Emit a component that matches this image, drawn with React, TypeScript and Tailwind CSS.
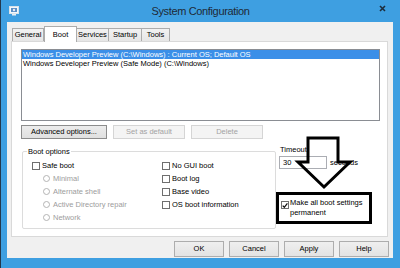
import React from "react";

const Check = ({ checked = false }: { checked?: boolean }) => (
  <span className="w-[8px] h-[8px] shrink-0 bg-white border border-[#6f6f6f] flex items-center justify-center">
    {checked && (
      <svg width="7" height="7" viewBox="0 0 7 7">
        <path d="M0.8 3.6 L2.7 5.6 L6.3 1" fill="none" stroke="#111" strokeWidth="1.5" />
      </svg>
    )}
  </span>
);

const Radio = () => (
  <span className="w-[7px] h-[7px] shrink-0 rounded-full bg-white border border-[#b4b4b4]" />
);

const Btn = ({ label, w, disabled = false, dark = false }: { label: string; w: string; disabled?: boolean; dark?: boolean }) => (
  <div
    className={`${w} h-full flex items-center justify-center border ${
      disabled
        ? "bg-[#f4f4f4] border-[#d5d5d5] text-[#a3a3a3]"
        : dark
        ? "bg-gradient-to-b from-[#ececec] to-[#e0e0e0] border-[#8c8c8c] text-black"
        : "bg-gradient-to-b from-[#efefef] to-[#e3e3e3] border-[#adadad] text-black"
    }`}
  >
    {label}
  </div>
);

const Tab = ({ label, w, active = false }: { label: string; w: string; active?: boolean }) => (
  <div
    className={`${w} flex items-center justify-center border border-b-0 border-[#acacac] ${
      active ? "h-[16px] bg-white relative z-10 -mb-px" : "h-[13px] bg-gradient-to-b from-[#f2f2f2] to-[#e6e6e6] -ml-px first:ml-0"
    }`}
  >
    {label}
  </div>
);

const App = () => {
  return (
    <div className="w-[400px] h-[268px] bg-[#3e9fe1] flex flex-col overflow-hidden border-l border-[#23384d] font-['Liberation_Sans',Arial,sans-serif] text-[7.5px] leading-none text-black">
      {/* Title bar */}
      <div className="h-[22px] flex items-center shrink-0">
        <div className="w-[40px] pl-[8px] flex items-center">
          <svg width="10" height="10" viewBox="0 0 10 10">
            <rect x="0.5" y="0.5" width="9" height="7" fill="#f4f8fb" stroke="#d8e2ea" />
            <rect x="2" y="2" width="6" height="4" fill="#5b8fc6" />
            <circle cx="5" cy="4" r="1.2" fill="#e9eef4" />
            <rect x="3" y="8" width="4" height="1.5" fill="#e6edf3" />
          </svg>
        </div>
        <div className="flex-1 text-center text-[11px] tracking-[-0.35px] text-[#1f2a36] pt-[1px]">System Configuration</div>
        <div className="w-[40px] flex justify-end pr-[14px] pb-[6px]">
          <svg width="7" height="7" viewBox="0 0 7 7">
            <path d="M1 1 L6 6 M6 1 L1 6" stroke="#1d2d3c" strokeWidth="1.6" />
          </svg>
        </div>
      </div>

      {/* Client */}
      <div className="ml-[6px] mr-[7px] h-[236px] shrink-0 bg-[#f0f0f0] flex flex-col">
        {/* Tabs */}
        <div className="h-[19px] pl-[5px] flex items-end shrink-0">
          <Tab label="General" w="w-[32px]" />
          <Tab label="Boot" w="w-[33px]" active />
          <Tab label="Services" w="w-[33px]" />
          <Tab label="Startup" w="w-[34px]" />
          <Tab label="Tools" w="w-[29px]" />
        </div>

        {/* Tab panel */}
        <div className="ml-[4px] w-[377px] h-[196px] bg-white border border-[#d9d9d9] relative flex flex-col">
          {/* OS list */}
          <div className="ml-[9px] mt-[7px] w-[359px] h-[72px] border border-[#8a8d93] bg-white flex flex-col">
            <div className="h-[9px] bg-[#3b8fe8] text-white pl-[1px] flex items-center whitespace-nowrap">
              Windows Developer Preview (C:\Windows) : Current OS; Default OS
            </div>
            <div className="h-[10px] pl-[1px] flex items-center whitespace-nowrap">
              Windows Developer Preview (Safe Mode) (C:\Windows)
            </div>
          </div>

          {/* List buttons */}
          <div className="ml-[9px] mt-[4px] h-[14px] flex gap-[6px]">
            <Btn label="Advanced options..." w="w-[86px]" dark />
            <Btn label="Set as default" w="w-[72px]" disabled />
            <Btn label="Delete" w="w-[72px]" disabled />
          </div>

          {/* Lower section */}
          <div className="mt-[6px] flex items-start">
            {/* Boot options group */}
            <div className="ml-[10px] mt-[6px] w-[254px] h-[78px] border border-[#dcdcdc] rounded-[2px] relative">
              <span className="absolute left-[4px] -top-[5px] bg-white px-[1px] leading-[9px]">Boot options</span>
              <div className="pt-[7px] pl-[9px] grid grid-cols-[130px_1fr] auto-rows-[13px]">
                <div className="flex items-center gap-[2px]"><Check /><span>Safe boot</span></div>
                <div className="flex items-center gap-[2px]"><Check /><span>No GUI boot</span></div>
                <div className="flex items-center gap-[3px] pl-[11px] text-[#9d9d9d]"><Radio /><span>Minimal</span></div>
                <div className="flex items-center gap-[2px]"><Check /><span>Boot log</span></div>
                <div className="flex items-center gap-[3px] pl-[11px] text-[#9d9d9d]"><Radio /><span>Alternate shell</span></div>
                <div className="flex items-center gap-[2px]"><Check /><span>Base video</span></div>
                <div className="flex items-center gap-[3px] pl-[11px] text-[#9d9d9d]"><Radio /><span>Active Directory repair</span></div>
                <div className="flex items-center gap-[2px]"><Check /><span>OS boot information</span></div>
                <div className="flex items-center gap-[3px] pl-[11px] text-[#9d9d9d]"><Radio /><span>Network</span></div>
              </div>
            </div>

            {/* Timeout column */}
            <div className="flex flex-col">
              <div className="pl-[4px] h-[10px] flex items-center">Timeout:</div>
              <div className="mt-[1px] flex items-center">
                <div className="ml-[3px] w-[48px] h-[13px] border border-[#abadb3] bg-white pl-[3px] flex items-center">30</div>
                <span className="ml-[3px]">seconds</span>
              </div>
              <div className="mt-[23px] w-[96px] h-[32px] border-[3px] border-black flex items-start">
                <div className="mt-[6px] ml-[2px]"><Check checked /></div>
                <div className="ml-[1px] mt-[3px] leading-[10px] whitespace-nowrap">
                  Make all boot settings
                  <br />
                  permanent
                </div>
              </div>
            </div>
          </div>

          {/* Annotation arrow */}
          <svg className="absolute left-[280px] top-[94px]" width="64" height="56" viewBox="0 0 64 56">
            <path d="M16 2 H46 V26 H58 L32 51 L6 26 H16 Z" fill="none" stroke="black" strokeWidth="3" strokeLinejoin="miter" />
          </svg>
        </div>

        {/* Dialog buttons */}
        <div className="mt-[4px] h-[16px] flex justify-end gap-[5px] pr-[4px]">
          <Btn label="OK" w="w-[50px]" />
          <Btn label="Cancel" w="w-[50px]" />
          <Btn label="Apply" w="w-[50px]" />
          <Btn label="Help" w="w-[50px]" />
        </div>
      </div>
    </div>
  );
};

export default App;
